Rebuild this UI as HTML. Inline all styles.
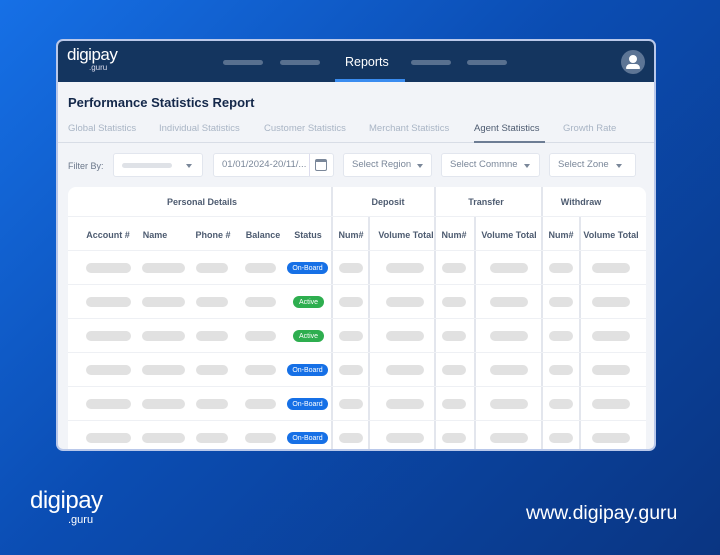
<!DOCTYPE html>
<html><head><meta charset="utf-8"><style>
*{margin:0;padding:0;box-sizing:border-box}
body{width:720px;height:555px;overflow:hidden;font-family:"Liberation Sans",sans-serif;background:linear-gradient(135deg,#1670e6 0%,#0b4db3 45%,#0a3582 100%);position:relative}
.card{position:absolute;left:56px;top:39px;width:600px;height:412px;border-radius:7px;background:#f2f4f8;border:2px solid #b9c8ea;overflow:hidden}
.hdr{position:absolute;left:0;top:0;width:100%;height:41px;background:#14355f}
.bar{position:absolute;top:19px;height:5px;border-radius:3px;background:#58708f;width:40px}
.a{position:absolute;white-space:nowrap}
.tabs span{position:absolute;top:82px;font-size:9.5px;color:#a9b5c5}
.sel{position:absolute;top:112px;height:24px;background:#fff;border-radius:3px;border:1px solid #e2e6ee;font-size:9.5px;color:#7a8799;line-height:22px;padding-left:8px}
.tri{position:absolute;top:10px;width:0;height:0;border-left:3.5px solid transparent;border-right:3.5px solid transparent;border-top:4px solid #7a8799}
.tbl{position:absolute;left:10px;top:146px;width:578px;height:280px;background:#fff;border-radius:8px}
.h1,.h2{position:absolute;font-size:9px;color:#4d5b70;font-weight:bold;transform:translateX(-50%);white-space:nowrap}
.v{position:absolute;top:0;bottom:0;width:2px;background:#e3e6ed}
.vs{position:absolute;top:29px;bottom:0;width:2px;background:#e3e6ed}
.hl{position:absolute;left:0;right:0;height:1px;background:#eef0f4}
.p{position:absolute;height:10px;border-radius:5px;background:#e1e1e1}
.b{position:absolute;height:12px;border-radius:6px;font-size:7px;color:#fff;text-align:center;line-height:12px}
</style></head><body>
<div class="a" style="left:30px;top:487px;color:#fff;font-size:24px;letter-spacing:-0.5px">digipay</div>
<div class="a" style="left:68px;top:514px;color:#fff;font-size:11px">.guru</div>
<div class="a" style="left:526px;top:502px;color:#fff;font-size:19.5px">www.digipay.guru</div>
<div class="card">
 <div class="hdr">
  <div class="a" style="left:9px;top:4px;color:#fff;font-size:17px;letter-spacing:-0.5px">digipay</div>
  <div class="a" style="left:31px;top:22px;color:#dde;font-size:8px">.guru</div>
  <div class="bar" style="left:165px"></div><div class="bar" style="left:222px"></div>
  <div class="bar" style="left:353px"></div><div class="bar" style="left:409px"></div>
  <div class="a" style="left:287px;top:14px;color:#fff;font-size:12.5px">Reports</div>
  <div style="position:absolute;left:277px;top:38px;width:70px;height:3px;background:#3a8cf0"></div>
  <div style="position:absolute;left:563px;top:9px;width:24px;height:24px;border-radius:50%;background:#5d7595">
   <div style="position:absolute;left:8px;top:5px;width:8px;height:8px;border-radius:50%;background:#fff"></div>
   <div style="position:absolute;left:5px;top:14px;width:14px;height:5px;border-radius:5px 5px 1px 1px;background:#fff"></div>
  </div>
 </div>
 <div class="a" style="left:10px;top:54px;font-size:13px;font-weight:bold;color:#14284a">Performance Statistics Report</div>
 <div class="tabs"><span style="left:10px">Global Statistics</span><span style="left:101px">Individual Statistics</span><span style="left:206px">Customer Statistics</span><span style="left:311px">Merchant Statistics</span><span style="left:416px;color:#4d5b70">Agent Statistics</span><span style="left:505px">Growth Rate</span></div>
 <div style="position:absolute;left:0;right:0;top:101px;height:1px;background:#d8dde6"></div>
 <div style="position:absolute;left:416px;top:100px;width:71px;height:2px;background:#6d7d94"></div>
 <div class="a" style="left:10px;top:120px;font-size:9px;color:#6b778a">Filter By:</div>
 <div class="sel" style="left:55px;width:90px"><div style="position:absolute;left:8px;top:9px;width:50px;height:5px;border-radius:3px;background:#dfe2e7"></div><div class="tri" style="left:72px"></div></div>
 <div class="sel" style="left:155px;width:121px">01/01/2024-20/11/...<div style="position:absolute;left:95px;top:0;width:1px;height:22px;background:#dde"></div><div style="position:absolute;left:101px;top:5px;width:12px;height:12px;border:1.3px solid #7a8799;border-radius:2px;border-top-width:3px"></div></div>
 <div class="sel" style="left:285px;width:89px">Select Region<div class="tri" style="left:73px"></div></div>
 <div class="sel" style="left:383px;width:99px">Select Commne<div class="tri" style="left:82px"></div></div>
 <div class="sel" style="left:491px;width:87px">Select Zone<div class="tri" style="left:66px"></div></div>
 <div class="tbl">
  <div class="v" style="left:263px"></div><div class="v" style="left:366px"></div><div class="v" style="left:473px"></div>
  <div class="vs" style="left:300px"></div><div class="vs" style="left:406px"></div><div class="vs" style="left:511px"></div>
  <div class="hl" style="top:29px"></div><div class="hl" style="top:63px"></div><div class="hl" style="top:97px"></div><div class="hl" style="top:131px"></div><div class="hl" style="top:165px"></div><div class="hl" style="top:199px"></div><div class="hl" style="top:233px"></div>
  <div class="h1" style="left:134px;top:10px">Personal Details</div><div class="h1" style="left:320px;top:10px">Deposit</div><div class="h1" style="left:418px;top:10px">Transfer</div><div class="h1" style="left:513px;top:10px">Withdraw</div>
  <div class="h2" style="left:40px;top:43px">Account #</div><div class="h2" style="left:87px;top:43px">Name</div><div class="h2" style="left:145px;top:43px">Phone #</div><div class="h2" style="left:195px;top:43px">Balance</div><div class="h2" style="left:240px;top:43px">Status</div>
  <div class="h2" style="left:283px;top:43px">Num#</div><div class="h2" style="left:338px;top:43px">Volume Total</div><div class="h2" style="left:386px;top:43px">Num#</div><div class="h2" style="left:441px;top:43px">Volume Total</div><div class="h2" style="left:493px;top:43px">Num#</div><div class="h2" style="left:543px;top:43px">Volume Total</div>
  <div id="rows"></div>
 </div>
</div>
<script>
var r='',st=['o','a','a','o','o','o'];
for(var i=0;i<6;i++){var y=76+i*34;
[[18,45],[74,43],[128,32],[177,31],[271,24],[318,38],[374,24],[422,38],[481,24],[524,38]].forEach(function(c){r+='<div class="p" style="left:'+c[0]+'px;top:'+y+'px;width:'+c[1]+'px"></div>'});
r+=st[i]=='o'?'<div class="b" style="left:219px;top:'+(y-1)+'px;width:41px;background:#1670e6;line-height:13px">On-Board</div>':'<div class="b" style="left:225px;top:'+(y-1)+'px;width:31px;background:#2eae4f;line-height:13px">Active</div>';}
document.getElementById('rows').innerHTML=r;
</script>
</body></html>
